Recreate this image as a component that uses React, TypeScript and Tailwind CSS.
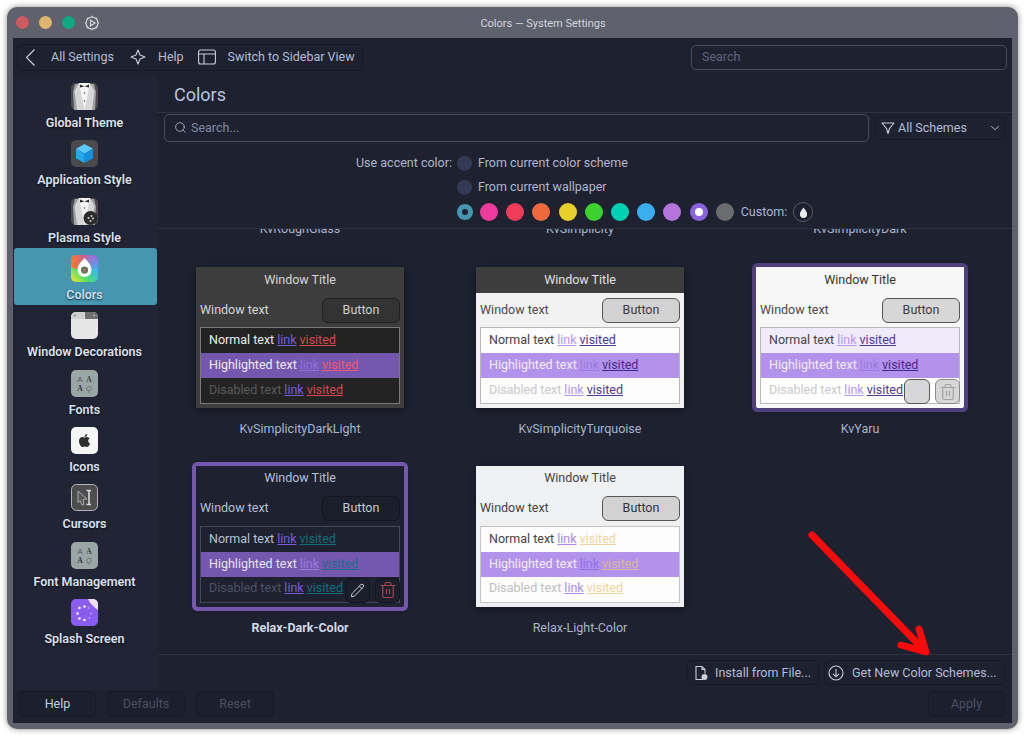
import React from "react";
import { ChevronDown, Search, Trash2, Pencil } from "lucide-react";
import { FaApple } from "react-icons/fa";

const Tux = ({ badge }: { badge?: boolean }) => (
  <svg viewBox="0 0 27 27" className="w-[27px] h-[27px]">
    <rect width="27" height="27" rx="5" fill="#4b4b4d" />
    <path d="M4 1h19l2 8-1 18H3L2 9z" fill="#a0a0a2" />
    <path d="M8 0h11l-2 27h-7z" fill="#f4f4f4" />
    <path d="M8 0l5.500 27H6L3.500 8zM19 0l-5.500 27H21l2.500-19z" fill="#d6d6d8" />
    <path d="M9 1.500l4.500 2 4.500-2v3l-4.500-1-4.500 1z" fill="#2c2c2e" />
    <circle cx="13.500" cy="10" r=".8" fill="#555" />
    <circle cx="13.500" cy="18" r=".8" fill="#555" />
    {badge && (
      <g>
        <circle cx="19.500" cy="20" r="7" fill="#2b2b2b" />
        <circle cx="17.500" cy="20" r="1" fill="#ddd" />
        <circle cx="20.500" cy="18" r="1" fill="#ddd" />
        <circle cx="22" cy="20.500" r="1" fill="#ddd" />
        <circle cx="19.500" cy="23" r="1" fill="#ddd" />
      </g>
    )}
  </svg>
);

const Cube = () => (
  <svg viewBox="0 0 27 27" className="w-[27px] h-[27px]">
    <rect width="27" height="27" rx="5" fill="#4a4a4c" />
    <path d="M13.500 4l8.500 4.800-8.500 4.800L5 8.800z" fill="#5cc8fb" />
    <path d="M5 8.800l8.500 4.800V23L5 18.200z" fill="#27a7f0" />
    <path d="M22 8.800l-8.500 4.800V23l8.500-4.800z" fill="#1590df" />
  </svg>
);

const ColorsIcon = () => (
  <svg viewBox="0 0 27 27" className="w-[27px] h-[27px]">
    <defs>
      <linearGradient id="cg1" x1="0" y1="1" x2="1" y2="0">
        <stop offset="0" stopColor="#ffe620" />
        <stop offset=".35" stopColor="#4be070" />
        <stop offset=".7" stopColor="#38b6f0" />
        <stop offset="1" stopColor="#b65ae0" />
      </linearGradient>
      <linearGradient id="cg2" x1="0" y1="0" x2="1" y2="0">
        <stop offset="0" stopColor="#ff7a20" stopOpacity="1" />
        <stop offset=".5" stopColor="#ff3f70" stopOpacity=".7" />
        <stop offset="1" stopColor="#c050e0" stopOpacity="0" />
      </linearGradient>
    </defs>
    <rect width="27" height="27" rx="5" fill="url(#cg1)" />
    <rect width="27" height="14" rx="5" fill="url(#cg2)" />
    <path d="M13.500 3c3 3.500 7 6.500 7 12a7 7 0 0 1-14 0c0-5.500 4-8.500 7-12z" fill="#fff" />
    <circle cx="13.500" cy="15" r="3.600" fill="#5a7a50" />
    <circle cx="13.500" cy="15" r="1.600" fill="#c05a8a" />
  </svg>
);

const WinDeco = () => (
  <svg viewBox="0 0 27 27" className="w-[27px] h-[27px]">
    <rect width="27" height="27" rx="5" fill="#e6e6e6" />
    <path d="M5 0h9v7H0V5a5 5 0 0 1 5-5z" fill="#cfcfcf" />
    <path d="M14 0h8a5 5 0 0 1 5 5v2H14z" fill="#6f6f6f" />
    <circle cx="4" cy="3.500" r=".8" fill="#666" />
    <circle cx="23" cy="3.500" r=".8" fill="#ddd" />
  </svg>
);

const FontsIcon = () => (
  <svg viewBox="0 0 27 27" className="w-[27px] h-[27px]">
    <rect width="27" height="27" rx="5" fill="#9aa6a6" />
    <text x="9" y="12" textAnchor="middle" fontSize="7.500" fontFamily="Liberation Sans" fill="#555">A</text>
    <text x="18" y="12" textAnchor="middle" fontSize="7.500" fontWeight="700" fontFamily="Liberation Serif" fill="#444">A</text>
    <text x="9" y="21" textAnchor="middle" fontSize="7.500" fontWeight="700" fontFamily="Liberation Serif" fill="#333">A</text>
    <text x="18" y="21" textAnchor="middle" fontSize="7.500" fontStyle="italic" fontFamily="Liberation Sans" fill="#666">Q</text>
  </svg>
);

const AppleIcon = () => (
  <div className="w-[27px] h-[27px] rounded-[5px] bg-[#f5f5f5] flex items-center justify-center">
    <FaApple className="w-[15px] h-[15px] text-[#2e2e2e]" />
  </div>
);

const CursorIcon = () => (
  <svg viewBox="0 0 27 27" className="w-[27px] h-[27px]">
    <rect x=".5" y=".5" width="26" height="26" rx="5" fill="#4d4d4f" stroke="#b5b5b5" />
    <path d="M7 7l9 8-4 .5 1 5-2 .5-2-4.500-2 2z" fill="#555" stroke="#c4c4c4" strokeWidth=".8" />
    <path d="M15.500 6.500h4.500M18 6.500v14M15.500 20.500h4.500" stroke="#d8d8d8" strokeWidth="1.600" fill="none" />
  </svg>
);

const SplashIcon = () => (
  <svg viewBox="0 0 27 27" className="w-[27px] h-[27px]">
    <rect width="27" height="27" rx="5" fill="#8b5cf0" />
    <path d="M17 0h5a5 5 0 0 1 5 5v6C23 8 19 5 17 0z" fill="#e8e0f8" />
    {[[13.500, 7.500], [8.500, 9], [6.500, 14.500], [8.500, 19.500], [13.500, 21], [18.500, 19], [20, 14.500], [17.500, 9]].map(([x, y], i) => (
      <circle key={i} cx={x} cy={y} r={i < 5 ? 1.200 : 0.800} fill="#fff" opacity={i < 5 ? 1 : 0.6} />
    ))}
  </svg>
);

const sidebar: [string, React.ReactNode][] = [
  ["Global Theme", <Tux />],
  ["Application Style", <Cube />],
  ["Plasma Style", <Tux badge />],
  ["Colors", <ColorsIcon />],
  ["Window Decorations", <WinDeco />],
  ["Fonts", <FontsIcon />],
  ["Icons", <AppleIcon />],
  ["Cursors", <CursorIcon />],
  ["Font Management", <FontsIcon />],
  ["Splash Screen", <SplashIcon />],
];

type Theme = {
  name: string;
  bold?: boolean;
  wrap: string;
  titleBar: string;
  windowText: string;
  button: string;
  box: string;
  normalBg: string;
  normal: string;
  link: string;
  visited: string;
  hiBg: string;
  hi: string;
  hiLink: string;
  hiVisited: string;
  disabledBg: string;
  disabled: string;
  action?: "dark" | "light";
};

const themes: Theme[] = [
  {
    name: "KvSimplicityDarkLight",
    wrap: "bg-[#3d3d3d]",
    titleBar: "bg-[#3d3d3d] text-[#d6d6d6]",
    windowText: "text-[#d6d6d6]",
    button: "bg-[#333333] border-[#1f1f24] text-[#cfcfcf]",
    box: "border-[#7a7a7a]",
    normalBg: "bg-[#232323]",
    normal: "text-[#ececec]",
    link: "text-[#7a5cd6]",
    visited: "text-[#d8474d]",
    hiBg: "bg-[#7457ae]",
    hi: "text-[#f0eaf8]",
    hiLink: "text-[#8f70dc]",
    hiVisited: "text-[#f2566e]",
    disabledBg: "bg-[#232323]",
    disabled: "text-[#5a5a5a]",
  },
  {
    name: "KvSimplicityTurquoise",
    wrap: "bg-[#f2f2f2]",
    titleBar: "bg-[#3d3d3d] text-[#e0e0e0]",
    windowText: "text-[#4a4a4a]",
    button: "bg-[#d2d2d2] border-[#555555] text-[#3c3c3c]",
    box: "border-[#b8b8b8]",
    normalBg: "bg-[#fcfcfc]",
    normal: "text-[#444444]",
    link: "text-[#b397f0]",
    visited: "text-[#4e3a94]",
    hiBg: "bg-[#b292ea]",
    hi: "text-[#f3edfb]",
    hiLink: "text-[#9a7be0]",
    hiVisited: "text-[#3f2a8c]",
    disabledBg: "bg-[#fcfcfc]",
    disabled: "text-[#c9c9c9]",
  },
  {
    name: "KvYaru",
    wrap: "bg-[#f7f7f7] rounded-[2px] ring-4 ring-[#4f3f7c]",
    titleBar: "bg-[#f7f7f7] text-[#333333]",
    windowText: "text-[#4a4a4a]",
    button: "bg-[#d7d7d7] border-[#555555] text-[#3c3c3c]",
    box: "border-[#b8b8b8]",
    normalBg: "bg-[#efebfa]",
    normal: "text-[#444444]",
    link: "text-[#b397f0]",
    visited: "text-[#4e3a94]",
    hiBg: "bg-[#b292ea]",
    hi: "text-[#f3edfb]",
    hiLink: "text-[#9a7be0]",
    hiVisited: "text-[#3f2a8c]",
    disabledBg: "bg-[#ffffff]",
    disabled: "text-[#c9c9c9]",
    action: "light",
  },
  {
    name: "Relax-Dark-Color",
    bold: true,
    wrap: "bg-[#1e2130] rounded-[2px] ring-4 ring-[#7457ae]",
    titleBar: "bg-[#1e2130] text-[#b8c0d4]",
    windowText: "text-[#b8c0d4]",
    button: "bg-[#1b1e2b] border-[#14161f] text-[#c4cbdc]",
    box: "border-[#444857]",
    normalBg: "bg-[#1e2130]",
    normal: "text-[#b8c0d4]",
    link: "text-[#7a5cd6]",
    visited: "text-[#0f6f78]",
    hiBg: "bg-[#7457ae]",
    hi: "text-[#e8e2f5]",
    hiLink: "text-[#9a7be0]",
    hiVisited: "text-[#1c6a8c]",
    disabledBg: "bg-[#1e2130]",
    disabled: "text-[#4c5163]",
    action: "dark",
  },
  {
    name: "Relax-Light-Color",
    wrap: "bg-[#eff0f2]",
    titleBar: "bg-[#eff0f2] text-[#444444]",
    windowText: "text-[#444444]",
    button: "bg-[#d2d2d2] border-[#555555] text-[#333333]",
    box: "border-[#c4c4c4]",
    normalBg: "bg-[#fdfdfd]",
    normal: "text-[#444444]",
    link: "text-[#a98af0]",
    visited: "text-[#f0d49c]",
    hiBg: "bg-[#b292ea]",
    hi: "text-[#f3edfb]",
    hiLink: "text-[#8f70e6]",
    hiVisited: "text-[#d9b8a0]",
    disabledBg: "bg-[#fdfdfd]",
    disabled: "text-[#c0c0c0]",
  },
];

const Row = ({ bg, label, tc, link, visited, h }: { bg: string; label: string; tc: string; link: string; visited: string; h: string }) => (
  <div className={`${h} ${bg} flex items-center pl-[8px] gap-[3px] whitespace-nowrap`}>
    <span className={tc}>{label}</span>
    <span className={`${link} underline`}>link</span>
    <span className={`${visited} underline`}>visited</span>
  </div>
);

const Card = ({ t }: { t: Theme }) => (
  <div className="flex flex-col items-center">
    <div className={`relative w-[208px] h-[141px] flex flex-col text-[12.5px] shadow-[0_2px_8px_rgba(0,0,0,0.35)] ${t.wrap}`}>
      <div className={`h-[26px] flex items-center justify-center ${t.titleBar}`}>Window Title</div>
      <div className="flex items-center justify-between px-[4px] h-[34px]">
        <span className={t.windowText}>Window text</span>
        <div className={`w-[78px] h-[25px] border rounded-[6px] flex items-center justify-center ${t.button}`}>Button</div>
      </div>
      <div className={`mx-[4px] border flex flex-col overflow-hidden ${t.box}`}>
        <Row h="h-[25px]" bg={t.normalBg} label="Normal text" tc={t.normal} link={t.link} visited={t.visited} />
        <Row h="h-[25px]" bg={t.hiBg} label="Highlighted text" tc={t.hi} link={t.hiLink} visited={t.hiVisited} />
        <Row h="h-[25px] pb-[1px]" bg={t.disabledBg} label="Disabled text" tc={t.disabled} link={t.link} visited={t.visited} />
      </div>
      {t.action === "dark" && (
        <div className="absolute right-[4px] bottom-[4px] flex gap-[5px]">
          <div className="w-[25px] h-[25px] rounded-[6px] bg-[#1b1e2b] border border-[#14161f] flex items-center justify-center">
            <Pencil className="w-[15px] h-[15px] text-[#d8dce6]" strokeWidth={1.500} />
          </div>
          <div className="w-[25px] h-[25px] rounded-[6px] bg-[#1b1e2b] border border-[#14161f] flex items-center justify-center">
            <Trash2 className="w-[18px] h-[18px] text-[#a8474f]" strokeWidth={1.500} />
          </div>
        </div>
      )}
      {t.action === "light" && (
        <div className="absolute right-[4px] bottom-[4px] flex gap-[5px]">
          <div className="w-[26px] h-[25px] rounded-[6px] bg-[#d7d7d7] border border-[#555555] flex items-center justify-center">
            <Pencil className="w-[15px] h-[15px] text-[#d4d4ea]" strokeWidth={1.500} />
          </div>
          <div className="w-[25px] h-[25px] rounded-[6px] bg-[#d7d7d7] border border-[#8a8a8a] flex items-center justify-center">
            <Trash2 className="w-[18px] h-[18px] text-[#a0a0a0]" strokeWidth={1.500} />
          </div>
        </div>
      )}
    </div>
    <div className={`mt-[13px] h-[16px] leading-[16px] text-[12.5px] ${t.bold ? "font-bold text-[#d3dae8]" : "text-[#aab4cc]"}`}>{t.name}</div>
  </div>
);

const dots = [
  "bg-[#ec3b9c]", "bg-[#ee3d58]", "bg-[#ee6a3c]", "bg-[#e9cf2a]", "bg-[#3bd12e]",
  "bg-[#00d0b4]", "bg-[#3aaeee]", "bg-[#b474dc]",
];

const GhostBtn = ({ w, children, dim }: { w: string; children: React.ReactNode; dim?: boolean }) => (
  <div className={`${w} h-[26px] pt-[1px] rounded-[5px] border border-[#171a26] bg-[#1c1f2d] flex items-center justify-center ${dim ? "text-[#4a4f62]" : "text-[#c6cee0]"}`}>{children}</div>
);

export default function App() {
  return (
    <div className="relative w-[1024px] h-[735px] bg-white overflow-hidden pt-[7px] pl-[7px] font-['Roboto',sans-serif] text-[12.5px]">
      <div className="w-[1011px] h-[722px] rounded-[10px] bg-[#5f616d] shadow-[0_0_6px_rgba(0,0,0,0.45)] flex flex-col">
        <div className="h-[31px] flex items-center relative shrink-0">
          <div className="ml-[9px] w-[13px] h-[13px] rounded-full bg-[#cc5a5f]" />
          <div className="ml-[10px] w-[13px] h-[13px] rounded-full bg-[#dcb56f]" />
          <div className="ml-[10px] w-[13px] h-[13px] rounded-full bg-[#0fa882]" />
          <svg viewBox="0 0 16 16" className="ml-[9px] w-[16px] h-[16px]" fill="none" stroke="#d4d6dc" strokeWidth="1.200">
            <circle cx="8" cy="8" r="6" />
            <path d="M6.500 5.200L11 8l-4.500 2.800z" />
            <path d="M8 .8v1.400M8 13.800v1.400M.8 8h1.400M13.800 8h1.400M2.900 2.900l1 1M12.100 12.100l1 1M2.900 13.100l1-1M12.100 3.900l1-1" />
          </svg>
          <div className="flex-1 text-center text-[11px] pt-[3px] text-[#d2d5de] pr-[32px]">Colors — System Settings</div>
        </div>

        <div className="mx-[6px] h-[685px] bg-[#1e2130] flex flex-col overflow-hidden">
          <div className="h-[38px] shrink-0 flex items-center pl-[4px] pr-[5px] text-[#b4bdd6]">
            <div className="h-[27px] w-[346px] border border-[#171a26] rounded-[5px] flex items-center">
              <svg viewBox="0 0 11 19" className="ml-[7px] w-[11px] h-[19px]" fill="none" stroke="#c6cee0" strokeWidth="1.200">
                <path d="M9.500 1.500L1.500 9.500L9.500 17.500" />
              </svg>
              <span className="ml-[15px]">All Settings</span>
              <svg viewBox="0 0 16 16" className="ml-[16px] w-[16px] h-[16px]" fill="none" stroke="#c6cee0" strokeWidth="1.100">
                <path d="M8 1l2 5 5 2-5 2-2 5-2-5-5-2 5-2z" strokeLinejoin="round" />
              </svg>
              <span className="ml-[12px]">Help</span>
              <svg viewBox="0 0 18 16" className="ml-[14px] w-[18px] h-[16px]" fill="none" stroke="#c6cee0" strokeWidth="1.100">
                <rect x=".6" y="1" width="16.800" height="14" rx="2" />
                <path d="M.6 5h16.800M6 5v10" />
              </svg>
              <span className="ml-[12px]">Switch to Sidebar View</span>
            </div>
            <div className="ml-auto w-[316px] h-[25px] border border-[#484c5c] rounded-[5px] flex items-center pl-[10px] text-[#5d647c]">Search</div>
          </div>

          <div className="flex-1 flex min-h-0">
            <div className="w-[144px] shrink-0 bg-[#212435]">
              {sidebar.map(([name, icon]) => (
                <div
                  key={name}
                  className={`h-[57.33px] ml-[1px] pr-[2px] rounded-[3px] flex flex-col items-center pt-[7px] ${name === "Colors" ? "bg-[#4796b0] text-[#c9dff0]" : "text-[#dbe1ee]"}`}
                >
                  {icon}
                  <div className="mt-[5px] h-[16px] leading-[16px] font-semibold text-[12.5px] whitespace-nowrap [text-shadow:0_1px_2px_rgba(0,0,0,0.7)]">{name}</div>
                </div>
              ))}
            </div>

            <div className="flex-1 flex flex-col min-w-0">
              <div className="h-[37px] shrink-0 flex items-center pl-[17px] text-[18px] text-[#b9c4de] border-b border-[#2e3140]">Colors</div>
              <div className="h-[29px] shrink-0 flex items-center pl-[7px]">
                <div className="w-[705px] h-[28px] border border-[#484c5c] rounded-[5px] flex items-center pl-[9px] text-[#8089a6]">
                  <Search className="w-[13px] h-[13px] text-[#b4bdd6]" strokeWidth={1.500} />
                  <span className="ml-[4px] pt-[1px]">Search...</span>
                </div>
                <div className="ml-[6px] w-[130px] h-[24px] border border-[#171a26] rounded-[5px] flex items-center pl-[5px] text-[#b4bdd6]">
                  <svg viewBox="0 0 14 14" className="w-[14px] h-[14px]" fill="none" stroke="#c6cee0" strokeWidth="1.100">
                    <path d="M1 2h12L8.500 7.500 7 12.500 5.500 7.500z" strokeLinejoin="round" />
                  </svg>
                  <span className="ml-[3px] pt-[2px]">All Schemes</span>
                  <ChevronDown className="ml-auto mr-[2px] w-[14px] h-[14px] text-[#c6cee0]" strokeWidth={1.500} />
                </div>
              </div>

              <div className="h-[87px] shrink-0 border-b border-[#2e3140] flex text-[#aeb6ce]">
                <div className="w-[300px] text-right pr-[5px] pt-[13px] leading-[16px] whitespace-nowrap">Use accent color:</div>
                <div className="flex flex-col">
                  <div className="h-[24px] mt-[9px] flex items-center">
                    <div className="w-[15px] h-[15px] rounded-full bg-[#333a55]" />
                    <span className="ml-[6px]">From current color scheme</span>
                  </div>
                  <div className="h-[24px] flex items-center">
                    <div className="w-[15px] h-[15px] rounded-full bg-[#333a55]" />
                    <span className="ml-[6px]">From current wallpaper</span>
                  </div>
                  <div className="h-[26px] flex items-center">
                    <div className="w-[16px] h-[16px] rounded-full border-[5px] border-[#4796b0] bg-[#1e2130]" />
                    <div className="ml-[7px] flex gap-[8.200px]">
                      {dots.map((c) => (
                        <div key={c} className={`w-[18px] h-[18px] rounded-full ${c}`} />
                      ))}
                      <div className="w-[18px] h-[18px] rounded-full bg-[#8a63dc] flex items-center justify-center">
                        <div className="w-[8px] h-[8px] rounded-full bg-white" />
                      </div>
                      <div className="w-[18px] h-[18px] rounded-full bg-[#6a6c70]" />
                    </div>
                    <span className="ml-[7px]">Custom:</span>
                    <div className="ml-[6px] w-[20px] h-[20px] rounded-full border border-[#555a6a] bg-[#1c1f2d] flex items-center justify-center">
                      <svg viewBox="0 0 10 12" className="w-[9px] h-[11px]">
                        <path d="M5 .5C6.500 3 9 5 9 8a4 4 0 0 1-8 0C1 5 3.500 3 5 .5z" fill="#ececec" />
                      </svg>
                    </div>
                  </div>
                </div>
              </div>

              <div className="flex-1 min-h-0 overflow-hidden px-[3px]">
                <div className="grid grid-cols-[280px_280px_280px] -mt-[7px] h-[14px] text-center leading-[14px] text-[#aab4cc] text-[12.5px]">
                  <div>KvRoughGlass</div>
                  <div>KvSimplicity</div>
                  <div>KvSimplicityDark</div>
                </div>
                <div className="grid grid-cols-[280px_280px_280px] gap-y-[28.500px] mt-[31px]">
                  {themes.map((t) => (
                    <Card key={t.name} t={t} />
                  ))}
                </div>
              </div>

              <div className="h-[36px] shrink-0 border-t border-[#2e3140] flex items-center justify-end gap-[5px] pr-[7px] text-[#b4bdd6]">
                <div className="w-[132px] h-[25px] border border-[#171a26] rounded-[5px] flex items-center pl-[5px]">
                  <svg viewBox="0 0 16 16" className="w-[16px] h-[16px]" fill="none" stroke="#c6cee0" strokeWidth="1.100">
                    <path d="M10 14.500H3V1.500h6l3 3v4M9 1.500v3h3" />
                    <circle cx="11.500" cy="12" r="3" fill="#c6cee0" stroke="none" />
                  </svg>
                  <span className="ml-[6px] pt-[2px]">Install from File...</span>
                </div>
                <div className="w-[181px] h-[25px] border border-[#171a26] rounded-[5px] flex items-center pl-[3px]">
                  <svg viewBox="0 0 16 16" className="w-[16px] h-[16px]" fill="none" stroke="#c6cee0" strokeWidth="1.100">
                    <circle cx="8" cy="8" r="7" />
                    <path d="M8 4v7.500M5 8.800l3 3 3-3" />
                  </svg>
                  <span className="ml-[8px] pt-[2px]">Get New Color Schemes...</span>
                </div>
              </div>
            </div>
          </div>

          <div className="h-[33px] shrink-0 flex items-start pt-[1px] pl-[6px] pr-[7px] gap-[11px]">
            <GhostBtn w="w-[77px]">Help</GhostBtn>
            <GhostBtn w="w-[78px]" dim>Defaults</GhostBtn>
            <GhostBtn w="w-[78px]" dim>Reset</GhostBtn>
            <div className="ml-auto">
              <GhostBtn w="w-[77px]" dim>Apply</GhostBtn>
            </div>
          </div>
        </div>
      </div>

      <svg viewBox="0 0 1024 735" className="absolute inset-0 w-[1024px] h-[735px] pointer-events-none" fill="none" stroke="#fa0a0a" strokeWidth="7" strokeLinecap="round" strokeLinejoin="round">
        <path d="M812 535L925 651M919 629L926 652L901 645" />
      </svg>
    </div>
  );
}
